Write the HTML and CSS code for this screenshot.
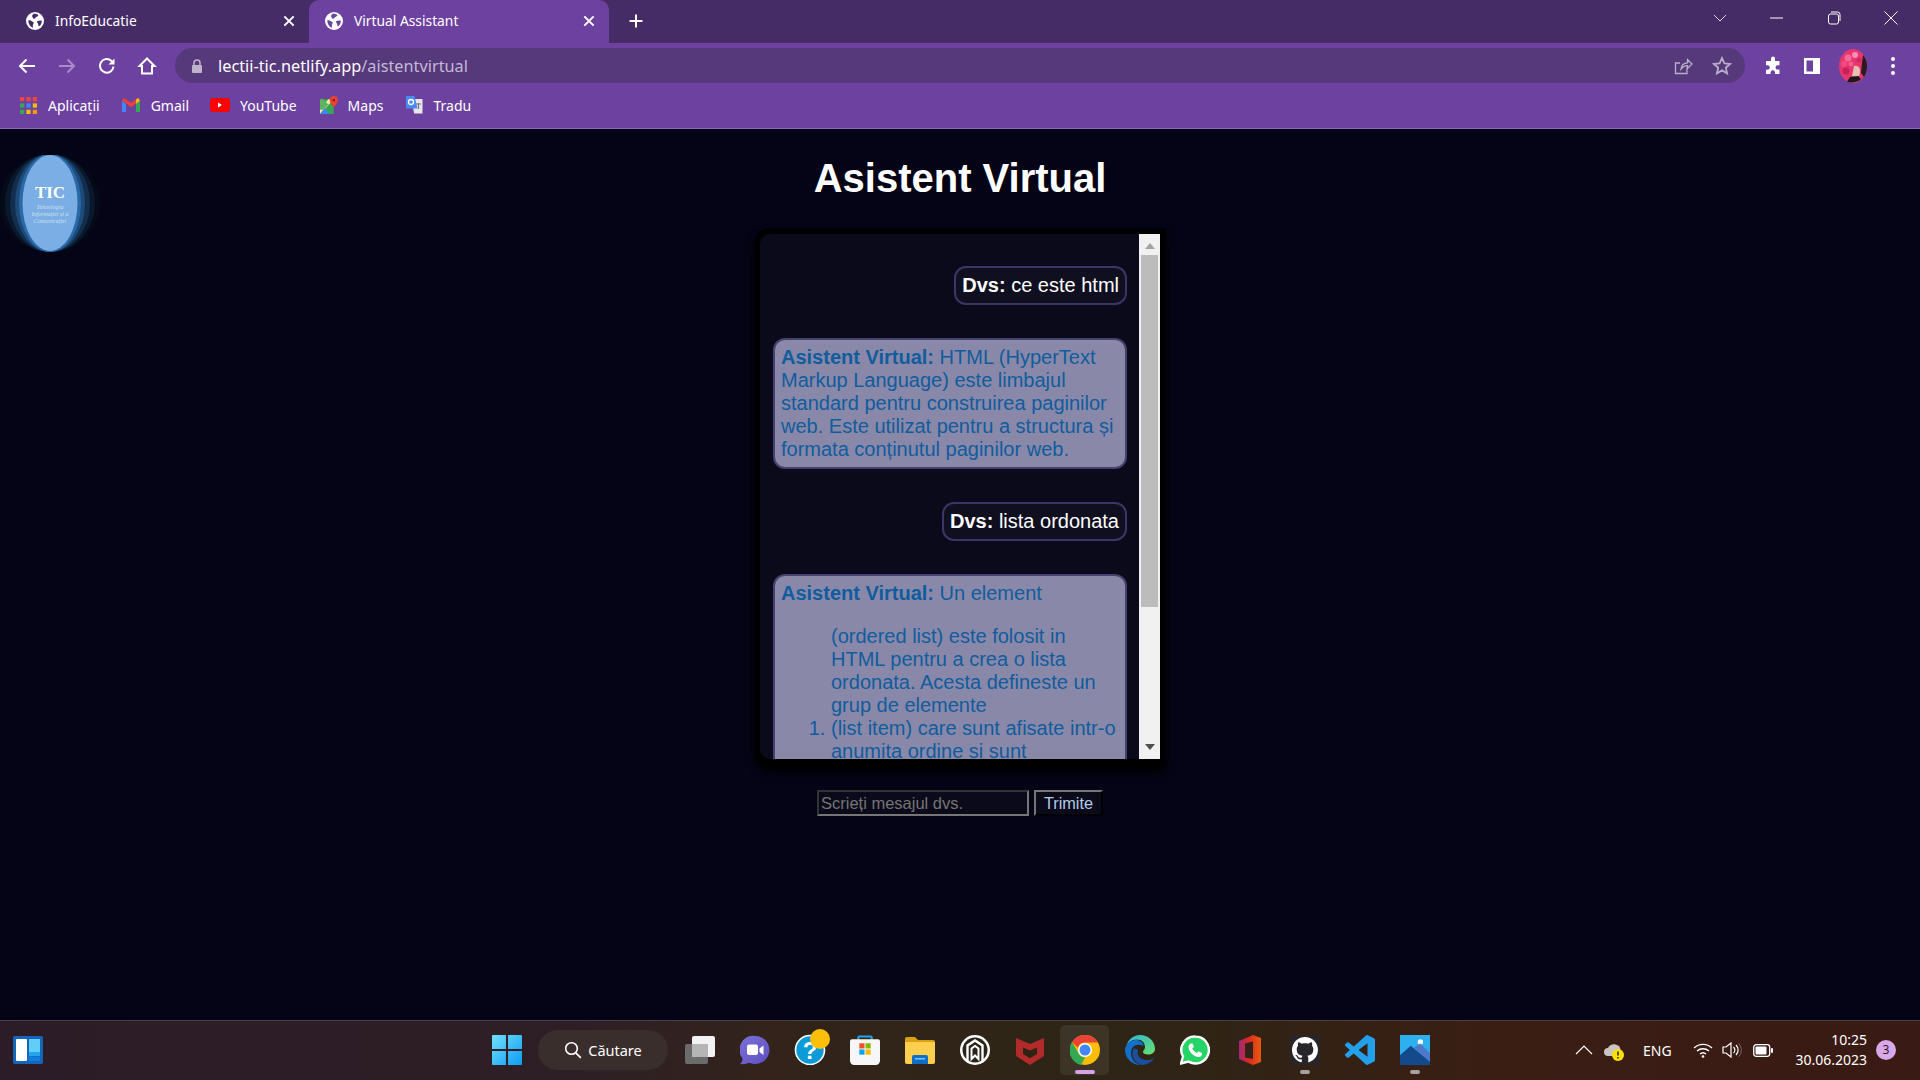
FILE: index.html
```html
<!DOCTYPE html>
<html lang="ro">
<head>
<meta charset="utf-8">
<title>Virtual Assistant</title>
<link rel="stylesheet" href="styles.css">
</head>
<body>
<svg class="defs" width="0" height="0" aria-hidden="true">
  <defs>
    <symbol id="globe" viewBox="0 0 18 18">
      <circle cx="9" cy="9" r="9" fill="#fff"/>
      <path d="M2.2 8.6c1.3-.6 2.4-.4 3.4.4.9.7 1.7.7 2 1.6.3 1-.6 1.6-.7 2.6-.1.9.3 2.2-.4 2.6C4.500 15 2.500 12.500 2.200 8.600zM9 1.600c1 .7 2.900.5 3.300 1.500.3.900-1.300 1.500-2.300 2.200-.8.600-1 1.700-2.100 1.500C6.800 6.600 6.600 5.200 6.100 4.200 5.800 3.500 7.500 1.700 9 1.600zM11.400 9c1.500-.4 3.100-.7 4.400-.3.100 2.500-1.100 4.600-2.900 5.800-.7-.7-.4-1.800-.9-2.700-.4-.9-1.500-2.300-.6-2.800z" fill="currentColor"/>
    </symbol>
    <symbol id="x" viewBox="0 0 12 12"><path d="M2 2l8 8M10 2l-8 8" stroke="#fff" stroke-width="1.700" fill="none"/></symbol>
  </defs>
</svg>

<header class="tabstrip">
  <div class="tab">
    <svg class="favicon idle"><use href="#globe"/></svg>
    <span class="tab-title">InfoEducatie</span>
    <svg class="tab-close"><use href="#x"/></svg>
  </div>
  <div class="tab active">
    <svg class="favicon busy"><use href="#globe"/></svg>
    <span class="tab-title">Virtual Assistant</span>
    <svg class="tab-close"><use href="#x"/></svg>
  </div>
  <svg class="newtab" viewBox="0 0 16 16"><path d="M8 1.500v13M1.500 8h13" stroke="#fff" stroke-width="2" fill="none"/></svg>
  <div class="winctl">
    <svg class="ctl" viewBox="0 0 14 8"><path d="M1 1l6 6 6-6" stroke="#d5cbe2" stroke-width="1" fill="none"/></svg>
    <svg class="ctl" viewBox="0 0 14 8"><path d="M0 4h13" stroke="#fff" stroke-width="1" fill="none"/></svg>
    <svg class="ctl" viewBox="0 0 14 14"><rect x="1.500" y="3" width="10" height="10" rx="2" stroke="#fff" fill="none"/><path d="M4 1h6.500a2.500 2.500 0 0 1 2.500 2.500V10" stroke="#fff" fill="none"/></svg>
    <svg class="ctl" viewBox="0 0 14 14"><path d="M.5.500l13 13M13.500.500l-13 13" stroke="#fff" stroke-width="1" fill="none"/></svg>
  </div>
</header>

<nav class="toolbar">
  <svg class="tool" viewBox="0 0 20 20"><path d="M18 10H3M9.500 3.500L3 10l6.500 6.500" stroke="#fff" stroke-width="2" fill="none"/></svg>
  <svg class="tool" viewBox="0 0 20 20"><path d="M2 10h15M10.500 3.500L17 10l-6.500 6.500" stroke="#a78cc8" stroke-width="2" fill="none"/></svg>
  <svg class="tool" viewBox="0 0 20 20"><path d="M16.500 10.500a6.800 6.800 0 1 1-2-5.500l2 2" stroke="#fff" stroke-width="2" fill="none"/><path d="M17.500 2.500v6h-6z" fill="#fff"/></svg>
  <svg class="tool" viewBox="0 0 20 20"><path d="M10 2.500L2.500 10H5v7.500h10V10h2.500z" stroke="#fff" stroke-width="2" fill="none"/></svg>
  <div class="omnibox">
    <svg class="lock" viewBox="0 0 12 14"><path d="M3 6V4a3 3 0 0 1 6 0v2" stroke="#bdb3cc" stroke-width="1.500" fill="none"/><rect x="1" y="6" width="10" height="8" rx="1" fill="#bdb3cc"/></svg>
    <span class="url">lectii-tic.netlify.app<span class="url-path">/aistentvirtual</span></span>
    <svg class="omni-icon" viewBox="0 0 20 20"><path d="M14 11.500V17.500H2.500V7H7M8 13c.5-4 3-6 6.500-6.200V3.500L19 8l-4.500 4.500V9.700C11.500 9.800 9.500 11 8 13z" stroke="#b9aeca" stroke-width="1.300" fill="none"/></svg>
    <svg class="omni-icon" viewBox="0 0 20 20"><path d="M10 2l2.400 5.300 5.800.6-4.400 3.800 1.300 5.700L10 14.400l-5.100 3 1.300-5.700L1.800 7.900l5.800-.6z" stroke="#b9aeca" stroke-width="1.800" fill="none"/></svg>
  </div>
  <svg class="tool puzzle" viewBox="0 0 20 20"><path d="M8 2.500a2 2 0 0 1 4 0V5h4.500v4.200h-1.800a2.200 2.200 0 0 0 0 4.400h1.800V18H12v-1.500a2.200 2.200 0 0 0-4.400 0V18H3v-4.200h1.500a2.300 2.300 0 0 0 0-4.600H3V5h5z" fill="#fff"/></svg>
  <svg class="tool side" viewBox="0 0 20 20"><path d="M2 2h16v16H2zM4.500 4.500v11h6.500v-11z" fill="#fff" fill-rule="evenodd"/></svg>
  <svg class="avatar" viewBox="0 0 28 34">
    <ellipse cx="14" cy="17" rx="14" ry="17" fill="#e6356f"/>
    <circle cx="9" cy="9" r="3.500" fill="#f56a96"/><circle cx="5" cy="15" r="3" fill="#f04a80"/><circle cx="7" cy="22" r="3.500" fill="#c92058"/><circle cx="16" cy="6" r="3" fill="#f78fb0"/><circle cx="20" cy="11" r="2.500" fill="#d42a62"/><circle cx="12" cy="15" r="2.500" fill="#f25f8e"/>
    <path d="M24 6c3 3 4 7 4 11s-1 8-3 11l-3-4 1-10z" fill="#2b1a20"/>
    <path d="M15 17c3-1 6 1 6 4s0 6-3 7l-5-1z" fill="#e8c0b0"/>
    <path d="M8 33l3-5 8-1 3 3c-3 3-9 4-14 3z" fill="#1a1a1a"/>
  </svg>
  <svg class="kebab" viewBox="0 0 4 20"><circle cx="2" cy="3" r="2" fill="#fff"/><circle cx="2" cy="10" r="2" fill="#fff"/><circle cx="2" cy="17" r="2" fill="#fff"/></svg>
</nav>

<nav class="bookmarks">
  <div class="bm bm-apps">
    <svg class="bm-icon" viewBox="0 0 16 16">
      <g fill="#e8453c"><rect y="0" width="4" height="4"/><rect x="6" width="4" height="4"/><rect x="12" width="4" height="4"/></g>
      <g><rect y="6" width="4" height="4" fill="#34a853"/><rect x="6" y="6" width="4" height="4" fill="#4285f4"/><rect x="12" y="6" width="4" height="4" fill="#fbbc05"/></g>
      <g><rect y="12" width="4" height="4" fill="#34a853"/><rect x="6" y="12" width="4" height="4" fill="#fbbc05"/><rect x="12" y="12" width="4" height="4" fill="#f29900"/></g>
    </svg>
    <span>Aplicații</span>
  </div>
  <div class="bm bm-gmail">
    <svg class="bm-icon gm" viewBox="0 0 18 14"><path d="M0 2.500V14h4V6z" fill="#4285f4"/><path d="M14 6v8h4V2.500z" fill="#34a853"/><path d="M0 2.500L9 9l9-6.500L16 0 9 5 2 0z" fill="#ea4335"/><path d="M14 6l4-3.500L16 0l-2 1.500z" fill="#fbbc05"/></svg>
    <span>Gmail</span>
  </div>
  <div class="bm bm-yt">
    <svg class="bm-icon yt" viewBox="0 0 20 14"><rect width="20" height="14" rx="3" fill="#f00"/><path d="M8 4.500v5l4-2.500z" fill="#fff"/></svg>
    <span>YouTube</span>
  </div>
  <div class="bm bm-maps">
    <svg class="bm-icon big" viewBox="0 0 17 17"><path d="M0 3h13v14H0z" fill="#34a853"/><path d="M0 17L13 3h-5L0 12z" fill="#fbe9a0"/><path d="M0 17h9L4.500 11z" fill="#4285f4"/><path d="M3 3l5 5-5 5H0V3z" fill="#5fb35f"/><path d="M13 0a3.800 3.800 0 0 0-3.800 3.800C9.200 6.500 13 11 13 11s3.800-4.500 3.800-7.200A3.800 3.800 0 0 0 13 0z" fill="#ea4335"/><circle cx="13" cy="3.800" r="1.300" fill="#8a1f17"/></svg>
    <span>Maps</span>
  </div>
  <div class="bm bm-tr">
    <svg class="bm-icon big" viewBox="0 0 18 18"><path d="M7 3h10.500v14.500H9z" fill="#e6e6ec"/><path d="M1 0h8.500l3 12.500H1z" fill="#4a8af4"/><circle cx="6" cy="6" r="2.500" stroke="#fff" stroke-width="1.300" fill="none"/><path d="M11 8h5M13.500 7v6" stroke="#777" stroke-width="1.200"/></svg>
    <span>Tradu</span>
  </div>
</nav>

<main class="page">
  <svg class="logo" viewBox="0 0 100 100" role="img" aria-label="TIC">
    <ellipse cx="50" cy="48" rx="50" ry="49" fill="#040a18"/>
    <ellipse cx="50" cy="48" rx="45" ry="49" fill="#09182c"/>
    <ellipse cx="50" cy="48" rx="40" ry="49" fill="#122e4c"/>
    <ellipse cx="50" cy="48" rx="35" ry="49" fill="#1d4a78"/>
    <ellipse cx="50" cy="48" rx="31" ry="49" fill="#2a69a8"/>
    <ellipse cx="50" cy="48" rx="27.500" ry="48" fill="#7aaee4"/>
    <text x="50" y="43" class="logo-tic">TIC</text>
    <text x="50" y="54" class="logo-sub">Tehnologia</text>
    <text x="50" y="61" class="logo-sub">Informației și a</text>
    <text x="50" y="68" class="logo-sub">Comunicației</text>
  </svg>

  <h1 class="title">Asistent Virtual</h1>

  <section class="chat">
    <div class="messages">
      <div class="msg user"><b>Dvs:</b> ce este html</div>
      <div class="msg bot"><b>Asistent Virtual:</b> HTML (HyperText Markup Language) este limbajul standard pentru construirea paginilor web. Este utilizat pentru a structura și formata conținutul paginilor web.</div>
      <div class="msg user"><b>Dvs:</b> lista ordonata</div>
      <div class="msg bot"><b>Asistent Virtual:</b> Un element
        <ol class="msg-list">
          (ordered list) este folosit in HTML pentru a crea o lista ordonata. Acesta defineste un grup de elemente
          <li>(list item) care sunt afisate intr-o anumita ordine si sunt numerotate automat de browser.</li>
        </ol>
      </div>
    </div>
    <div class="scrollbar">
      <svg class="sb-arrow" viewBox="0 0 10 6"><path d="M0 6l5-6 5 6z" fill="#a3a3a3"/></svg>
      <div class="sb-track"><div class="sb-thumb"></div></div>
      <svg class="sb-arrow" viewBox="0 0 10 6"><path d="M0 0l5 6 5-6z" fill="#505050"/></svg>
    </div>
  </section>

  <form class="composer">
    <input class="composer-input" type="text" placeholder="Scrieți mesajul dvs.">
    <button class="composer-send" type="button">Trimite</button>
  </form>
</main>

<footer class="taskbar">
  <div class="tb-left">
    <svg class="widgets" viewBox="0 0 30 28"><rect width="30" height="28" rx="2" fill="#1565b8"/><rect x="3" y="3" width="11" height="22" rx="1" fill="#fff"/><rect x="16" y="3" width="11" height="13" fill="#63cdfa"/><rect x="16" y="16" width="11" height="4" fill="#25a4ee"/><rect x="16" y="20.500" width="11" height="4.500" fill="#0c7fe0"/></svg>
  </div>
  <div class="tb-center">
    <div class="slot start">
      <svg class="ic" viewBox="0 0 29 29"><defs><linearGradient id="win" x1="0" y1="0" x2="1" y2="1"><stop offset="0" stop-color="#6fe0fb"/><stop offset="1" stop-color="#0f9cf3"/></linearGradient></defs><path d="M0 1a1 1 0 0 1 1-1h12.500v13.500H0zM15.500 0H28a1 1 0 0 1 1 1v12.500H15.500zM0 15.500h13.500V29H1a1 1 0 0 1-1-1zM15.500 15.500H29V28a1 1 0 0 1-1 1H15.500z" fill="url(#win)"/></svg>
    </div>
    <div class="search">
      <svg class="search-ic" viewBox="0 0 18 18"><circle cx="7.500" cy="7.500" r="5.800" stroke="#fff" stroke-width="1.600" fill="none"/><path d="M11.800 11.800l5 5" stroke="#fff" stroke-width="1.800"/></svg>
      <span>Căutare</span>
    </div>
    <div class="slot">
      <svg class="ic" viewBox="0 0 30 28"><rect y="8" width="23" height="20" rx="2" fill="#6b6b6b"/><rect x="7" width="23" height="21" rx="2" fill="#f2f2f2"/><rect x="7" y="8" width="16" height="13" fill="#b5b5b5"/></svg>
    </div>
    <div class="slot">
      <svg class="ic" viewBox="0 0 30 30"><defs><linearGradient id="meet" x1="0" y1="0" x2="1" y2="1"><stop offset="0" stop-color="#7a70d8"/><stop offset="1" stop-color="#5f4fc0"/></linearGradient></defs><path d="M15.500 1a14 14 0 1 1-6 26.700C7 28.800 3 29.500 0 29c1.800-1.500 2.500-3.400 2.500-5.500A14 14 0 0 1 15.500 1z" fill="url(#meet)"/><rect x="7" y="9.500" width="11" height="10.500" rx="2" fill="#fff"/><path d="M19.500 13.500l4-3v9.500l-4-3z" fill="#fff"/></svg>
    </div>
    <div class="slot">
      <svg class="ic help" viewBox="0 0 36 36"><circle cx="16" cy="21" r="14.500" fill="#0a9bd8" stroke="#fff" stroke-width="1.600"/><text x="16" y="30" class="help-q">?</text><circle cx="26" cy="10" r="10" fill="#fdc00a"/></svg>
    </div>
    <div class="slot">
      <svg class="ic" viewBox="0 0 29 29"><path d="M8 6V2.500a1 1 0 0 1 1-1h11a1 1 0 0 1 1 1V6" stroke="#21a4ea" stroke-width="2" fill="none"/><path d="M2 4h25a2 2 0 0 1 2 2v19a4 4 0 0 1-4 4H4a4 4 0 0 1-4-4V6a2 2 0 0 1 2-2z" fill="#f7f7f7"/><rect x="9" y="8" width="5" height="5" fill="#f25022"/><rect x="15" y="8" width="5" height="5" fill="#7fba00"/><rect x="9" y="14" width="5" height="5" fill="#00a4ef"/><rect x="15" y="14" width="5" height="5" fill="#ffb900"/></svg>
    </div>
    <div class="slot">
      <svg class="ic wide" viewBox="0 0 30 27"><path d="M0 2a2 2 0 0 1 2-2h8l3 3h15a2 2 0 0 1 2 2v3H0z" fill="#d9a011"/><path d="M0 5h30v20a2 2 0 0 1-2 2H2a2 2 0 0 1-2-2z" fill="#fdcf4f"/><path d="M7 27v-7a2 2 0 0 1 2-2h12a2 2 0 0 1 2 2v7z" fill="#0f6fc6"/><rect x="10" y="21" width="10" height="1.500" fill="#7fc4f0"/></svg>
    </div>
    <div class="slot">
      <svg class="ic" viewBox="0 0 30 30"><circle cx="15" cy="15" r="15" fill="#fff"/><circle cx="15" cy="15" r="12.500" fill="#2a2419"/><path d="M7.500 26V10.500L15 5.500l7.500 5V26" stroke="#fff" stroke-width="2.400" fill="none"/><path d="M11.500 24V13.500L15 11l3.500 2.500V24L15 20.500z" stroke="#fff" stroke-width="2" fill="none"/></svg>
    </div>
    <div class="slot">
      <svg class="ic" viewBox="0 0 28 30"><path d="M0 3l14 6 14-6v18l-14 9-14-9z" fill="#b32a2a"/><path d="M7 12.500l7 3 7-3v6.500l-7 4.300-7-4.300z" fill="#2d2416"/></svg>
    </div>
    <div class="slot hover">
      <svg class="ic" viewBox="0 0 30 30"><circle cx="15" cy="15" r="15" fill="#fbbc05"/><path d="M15 0a15 15 0 0 1 13 7.500H15a7.500 7.500 0 0 0-7.200 5.300L2 7A15 15 0 0 1 15 0z" fill="#ea4335"/><path d="M2 7l7.500 13A7.500 7.500 0 0 0 15 22.500L11 30A15 15 0 0 1 2 7z" fill="#34a853"/><circle cx="15" cy="15" r="7" fill="#fff"/><circle cx="15" cy="15" r="5.500" fill="#4285f4"/></svg>
      <span class="run active-run"></span>
    </div>
    <div class="slot">
      <svg class="ic" viewBox="0 0 30 30"><defs><linearGradient id="edge" x1="0" y1="0" x2="1" y2="1"><stop offset="0" stop-color="#2cb6e0"/><stop offset="1" stop-color="#6be06a"/></linearGradient></defs><path d="M15 0c8 0 15 6 15 14 0 3.500-3 5.500-7 5.500-3 0-5-1-5-2.500 0-1.500 2-2 2-5 0-4-3-7.500-8-7.500-5.500 0-9 3-11 7C3 5 8 0 15 0z" fill="url(#edge)"/><path d="M1 11.500C3 7 7 5 11 5c4 0 7.500 2.500 7.500 6 0 0-4-2.500-8.500-.5C6 12.500 5 18 7 23c1.500 4 5 6 8 7C7 30 0 23 0 15c0-1 .3-2.500 1-3.500z" fill="#1170c9"/><path d="M8 15c-2.500 6 2 14 9 15 5 0 10-3 12-7-3 2-8 3-12 1-4-2-5-5-4-9-2-2-4-2-5 0z" fill="#1a4fa0"/></svg>
    </div>
    <div class="slot">
      <svg class="ic" viewBox="0 0 30 30"><path d="M15.500 1.500A13.500 13.500 0 1 1 8.500 26.600L1 28.500l2-7A13.500 13.500 0 0 1 15.500 1.500z" fill="#25d366" stroke="#fff" stroke-width="2.400"/><path d="M11 8.500c-1 0-2.500 1.500-2.500 3.500 0 4.500 5.500 10 10 10 2 0 3.500-1.500 3.500-2.500v-1.500l-3.500-1.700-1.500 1.700c-2-.7-4-2.700-4.700-4.700l1.700-1.500L12.500 8.500z" fill="#fff"/></svg>
    </div>
    <div class="slot">
      <svg class="ic narrow" viewBox="0 0 22 30"><defs><linearGradient id="off" x1="0" y1="0" x2="1" y2="0"><stop offset="0" stop-color="#9c2a7a"/><stop offset=".4" stop-color="#d62828"/><stop offset="1" stop-color="#e85a0c"/></linearGradient></defs><path d="M0 6L14 0l8 3v24l-8 3L0 24z" fill="url(#off)"/><path d="M6 8.500l8-2v17.500l-8-1.500z" fill="#332218"/></svg>
    </div>
    <div class="slot">
      <svg class="ic gh" viewBox="0 0 30 30"><rect width="30" height="30" fill="#27252a"/><g transform="translate(2 2) scale(1.625)"><path fill-rule="evenodd" fill="#fff" d="M8 0C3.580 0 0 3.580 0 8c0 3.540 2.290 6.530 5.470 7.590.4.070.55-.17.55-.38 0-.19-.01-.82-.01-1.490-2.010.37-2.530-.49-2.690-.94-.09-.23-.48-.94-.82-1.130-.28-.15-.68-.52-.01-.53.630-.01 1.080.58 1.230.82.720 1.210 1.870.87 2.330.66.070-.52.280-.87.510-1.070-1.780-.2-3.640-.89-3.640-3.950 0-.87.310-1.590.820-2.150-.08-.2-.36-1.020.080-2.120 0 0 .67-.21 2.200.82.640-.18 1.320-.27 2-.27.680 0 1.360.090 2 .27 1.530-1.040 2.200-.82 2.200-.82.440 1.100.160 1.920.080 2.120.510.560.820 1.270.820 2.150 0 3.070-1.870 3.750-3.650 3.950.290.250.540.730.540 1.480 0 1.070-.01 1.930-.01 2.200 0 .21.150.46.550.38A8.013 8.013 0 0016 8c0-4.420-3.580-8-8-8z"/></g></svg>
      <span class="run"></span>
    </div>
    <div class="slot">
      <svg class="ic" viewBox="0 0 24 24"><path fill="#23a0ea" d="M23.150 2.587L18.210.21a1.494 1.494 0 0 0-1.705.29l-9.460 8.630-4.120-3.128a.999.999 0 0 0-1.276.057L.327 7.261A1 1 0 0 0 .326 8.740L3.899 12 .326 15.260a1 1 0 0 0 .001 1.479L1.650 17.940a.999.999 0 0 0 1.276.057l4.120-3.128 9.460 8.630a1.492 1.492 0 0 0 1.704.29l4.942-2.377A1.500 1.500 0 0 0 24 20.060V3.939a1.500 1.500 0 0 0-.85-1.352zm-5.146 14.861L10.826 12l7.178-5.448v10.896z"/></svg>
    </div>
    <div class="slot">
      <svg class="ic" viewBox="0 0 28 28"><rect width="28" height="28" fill="#2db0ee"/><circle cx="19" cy="6.500" r="2.500" fill="#fff"/><path d="M13 12l6-4 9 9v8z" fill="#4f78c8"/><path d="M0 28V19l10-9 18 15v3z" fill="#144a8c"/></svg>
      <span class="run"></span>
    </div>
  </div>
  <div class="tray">
    <svg class="tr-ic chev" viewBox="0 0 18 10"><path d="M1 9l8-8 8 8" stroke="#fff" stroke-width="1.200" fill="none"/></svg>
    <svg class="tr-ic cloud" viewBox="0 0 20 20"><path d="M4 15a4 4 0 0 1 0-8c1-3 6-5 9-3 3 1 4 4 3 6v5z" fill="#c9c5c2"/><circle cx="14" cy="14" r="6" fill="#ffe000"/><path d="M14 10.500v4M14 16v1.500" stroke="#222" stroke-width="1.500"/></svg>
    <span class="lang">ENG</span>
    <svg class="tr-ic wifi" viewBox="0 0 20 16"><path d="M1 6a13 13 0 0 1 18 0M4 9a9 9 0 0 1 12 0M7 12a4.500 4.500 0 0 1 6 0" stroke="#fff" stroke-width="1.400" fill="none"/><circle cx="10" cy="14.500" r="1.300" fill="#fff"/></svg>
    <svg class="tr-ic" viewBox="0 0 20 16"><path d="M1 5h3l5-4v14l-5-4H1z" stroke="#fff" stroke-width="1.200" fill="none"/><path d="M11.500 5a4 4 0 0 1 0 6M14 3a7 7 0 0 1 0 10" stroke="#fff" stroke-width="1.200" fill="none"/><path d="M16.500 1a10 10 0 0 1 0 14" stroke="#7a6360" stroke-width="1" fill="none"/></svg>
    <svg class="tr-ic batt" viewBox="0 0 20 13"><rect x=".7" y=".7" width="16" height="11.600" rx="2.500" stroke="#fff" stroke-width="1.300" fill="none"/><rect x="2.500" y="2.500" width="11" height="8" rx="1" fill="#fff"/><rect x="18" y="4" width="2" height="5" rx="1" fill="#fff"/></svg>
    <div class="clock"><span>10:25</span><span>30.06.2023</span></div>
    <span class="badge">3</span>
  </div>
</footer>
</body>
</html>
```

FILE: styles.css
```css
* { box-sizing: border-box; }
html, body { margin: 0; padding: 0; }
body {
  width: 1920px;
  height: 1080px;
  overflow: hidden;
  display: flex;
  flex-direction: column;
  background: #040416;
  font-family: "Liberation Sans", Arial, sans-serif;
}
.defs { position: absolute; }

/* tab strip */
.tabstrip {
  height: 43px;
  flex: none;
  display: flex;
  align-items: center;
  background: #452c66;
  color: #fff;
  font-family: "Noto Sans", sans-serif;
}
.tab {
  width: 309px;
  height: 43px;
  flex: none;
  display: flex;
  align-items: center;
  padding: 0 13px 2px 26px;
}
.tab.active {
  width: 300px;
  padding-left: 16px;
  background: #6d41a0;
  border-radius: 10px 10px 0 0;
}
.favicon { width: 18px; height: 18px; flex: none; }
.favicon.idle { color: #452c66; }
.favicon.busy { color: #6d41a0; }
.tab-title { margin-left: 11px; font-size: 13.8px; flex: 1; }
.tab-close { width: 14px; height: 14px; flex: none; }
.newtab { width: 16px; height: 16px; margin: -2px 0 0 19px; flex: none; }
.winctl {
  margin-left: auto;
  margin-top: -7px;
  display: flex;
  align-items: center;
  padding-right: 22px;
}
.ctl { width: 14px; height: 14px; flex: none; margin-left: 43px; }

/* toolbar */
.toolbar {
  height: 43px;
  flex: none;
  display: flex;
  align-items: center;
  background: #6d41a0;
  padding: 2px 0 0 17px;
}
.tool { width: 20px; height: 20px; flex: none; margin-right: 20px; }
.omnibox {
  width: 1570px;
  height: 35px;
  flex: none;
  margin: 0 18px 0 -2px;
  display: flex;
  align-items: center;
  background: #56397a;
  border-radius: 18px;
  padding-left: 16px;
  padding-right: 13px;
  color: #fff;
  font-family: "Noto Sans", sans-serif;
}
.lock { width: 12px; height: 14px; flex: none; }
.url { margin-left: 15px; font-size: 16.3px; flex: 1; }
.url-path { color: #c5b8d8; }
.omni-icon { width: 20px; height: 20px; flex: none; margin-left: 19px; }
.tool.puzzle { margin-right: 19px; }
.tool.side { margin-right: 17px; }
.avatar { width: 28px; height: 34px; flex: none; margin-right: 24px; }
.kebab { width: 4px; height: 20px; flex: none; }

/* bookmarks */
.bookmarks {
  height: 43px;
  flex: none;
  display: flex;
  align-items: center;
  background: #6d41a0;
  border-bottom: 1px solid #8a68b8;
  padding: 0 0 4px 20px;
  color: #fff;
  font-family: "Noto Sans", sans-serif;
  font-size: 14px;
}
.bm { display: flex; align-items: center; flex: none; gap: 11px; }
.bm-icon { width: 17px; height: 17px; flex: none; }
.bm-icon.gm { width: 18px; height: 14px; }
.bm-icon.yt { width: 20px; height: 14px; }
.bm-icon.big { width: 18px; height: 18px; }
.bm-gmail { margin-left: 22px; }
.bm-yt { margin-left: 21px; gap: 10px; }
.bm-maps { margin-left: 23px; gap: 10px; }
.bm-tr { margin-left: 22px; gap: 10px; }

/* page */
.page {
  position: relative;
  flex: 1;
  display: flex;
  flex-direction: column;
  align-items: center;
  background: #040416;
  min-height: 0;
}
.logo {
  position: absolute;
  left: 0;
  top: 26px;
  width: 100px;
  height: 100px;
}
.logo-tic {
  font-family: "Liberation Serif", serif;
  font-weight: 700;
  font-size: 17px;
  fill: #fff;
  text-anchor: middle;
}
.logo-sub {
  font-family: "Liberation Serif", serif;
  font-style: italic;
  font-size: 6px;
  fill: #cfe0f4;
  text-anchor: middle;
}
.title {
  margin: 26px 0 33px;
  color: #fff;
  font-size: 40px;
  line-height: 46px;
  font-weight: 700;
}

/* chat */
.chat {
  width: 400px;
  height: 525px;
  flex: none;
  display: flex;
  background: #0a0a1a;
  border-radius: 10px 0 0 10px;
  box-shadow: 0 0 0 6px #000, 0 7px 8px 6px #000;
  font-size: 20px;
  line-height: 23px;
}
.messages {
  flex: 1;
  min-width: 0;
  overflow: hidden;
  display: flex;
  flex-direction: column;
  align-items: flex-end;
  gap: 33px;
  padding: 32px 12px 0 13px;
}
.msg {
  flex: none;
  padding: 6px;
  border: 2px solid #3a3668;
  border-radius: 12px;
}
.msg.user { background: #100f20; color: #fff; }
.msg.bot { width: 100%; background: #8a88a8; color: #0f5c9f; border-color: #45406e; }
.msg-list { margin: 20px 0; padding-left: 50px; }
.scrollbar {
  width: 21px;
  flex: none;
  display: flex;
  flex-direction: column;
  align-items: center;
  background: #f1f1f1;
  padding: 9px 2px;
}
.sb-arrow { width: 10px; height: 6px; flex: none; }
.sb-track { flex: 1; width: 100%; padding-top: 6px; }
.sb-thumb { height: 352px; background: #bcbcbc; }

/* composer */
.composer {
  margin-top: 31px;
  display: flex;
  gap: 5px;
}
.composer-input, .composer-send {
  height: 26px;
  font-family: "Liberation Sans", Arial, sans-serif;
  background: #0a0a1a;
  padding: 1px 2px;
}
.composer-input {
  width: 212px;
  font-size: 16.5px;
  color: #ddd;
  border: 2px solid #767676;
  border-color: #333 #767676 #767676 #333;
}
.composer-input::placeholder { color: #757575; opacity: 1; }
.composer-send {
  width: 69px;
  font-size: 16.3px;
  color: #b4cbe8;
  border: 2px solid #000;
  border-color: #767676 #000 #000 #767676;
}

/* taskbar */
.taskbar {
  height: 60px;
  flex: none;
  display: grid;
  grid-template-columns: 479px 962px 1fr;
  align-items: start;
  background: linear-gradient(90deg, #2b1c27 0%, #2e1f26 30%, #33231b 40%, #2e2516 55%, #2f2415 62%, #3a1e14 78%, #3a1a14 100%);
  border-top: 1px solid #4a4048;
  color: #fff;
  font-family: "Noto Sans", sans-serif;
}
.tb-left { height: 58px; display: flex; align-items: center; }
.widgets { width: 30px; height: 28px; margin-left: 13px; display: block; }
.tb-center { display: flex; align-items: center; height: 58px; }
.slot {
  position: relative;
  width: 55px;
  height: 58px;
  flex: none;
  display: flex;
  align-items: center;
  justify-content: center;
}
.slot.start { width: 59px; justify-content: flex-start; padding-left: 13px; }
.ic { width: 30px; height: 30px; flex: none; display: block; }
.ic.help { width: 36px; height: 36px; margin-top: -6px; margin-left: 4px; }
.ic.narrow { width: 22px; }
.ic.wide { height: 27px; }
.ic.gh { width: 30px; height: 30px; }
.help-q {
  font-family: "Liberation Sans", sans-serif;
  font-weight: 700;
  font-size: 24px;
  fill: #fff;
  text-anchor: middle;
}
.slot.hover::before {
  content: "";
  position: absolute;
  left: 3px;
  right: 3px;
  top: 4px;
  bottom: 4px;
  background: rgba(255, 255, 255, 0.07);
  border-radius: 5px;
}
.slot.hover .ic { position: relative; }
.run {
  position: absolute;
  left: 50%;
  bottom: 5px;
  width: 10px;
  height: 4px;
  margin-left: -5px;
  border-radius: 2px;
  background: #a8a09c;
}
.run.active-run { width: 20px; margin-left: -10px; background: #d8a0e8; }
.search {
  width: 130px;
  height: 40px;
  flex: none;
  margin-right: 4px;
  display: flex;
  align-items: center;
  justify-content: center;
  gap: 6px;
  background: #3a2e2c;
  border-radius: 20px;
  font-size: 14.5px;
}
.search-ic { width: 18px; height: 18px; flex: none; }
.tray { height: 58px; display: flex; align-items: center; padding-left: 133px; font-size: 14px; }
.tr-ic { width: 20px; height: 16px; flex: none; }
.tr-ic.cloud { height: 20px; margin-left: 10px; margin-top: 2px; }
.tr-ic.wifi { margin-left: 20px; }
.tr-ic.batt { height: 13px; margin-left: 11px; }
.tr-ic.chev { height: 10px; }
.tr-ic + .tr-ic { margin-left: 9px; }
.tr-ic.chev + .cloud { margin-left: 10px; }
.tr-ic.batt { margin-left: 11px; }
.lang { margin-left: 19px; width: 30px; flex: none; }
.clock {
  width: 75px;
  margin-left: 19px;
  flex: none;
  display: flex;
  flex-direction: column;
  align-items: flex-end;
  line-height: 20px;
}
.badge {
  width: 20px;
  height: 20px;
  flex: none;
  margin-left: 9px;
  border-radius: 50%;
  background: #d8a8e8;
  color: #2a1a2a;
  font-size: 12px;
  line-height: 20px;
  text-align: center;
}
```
